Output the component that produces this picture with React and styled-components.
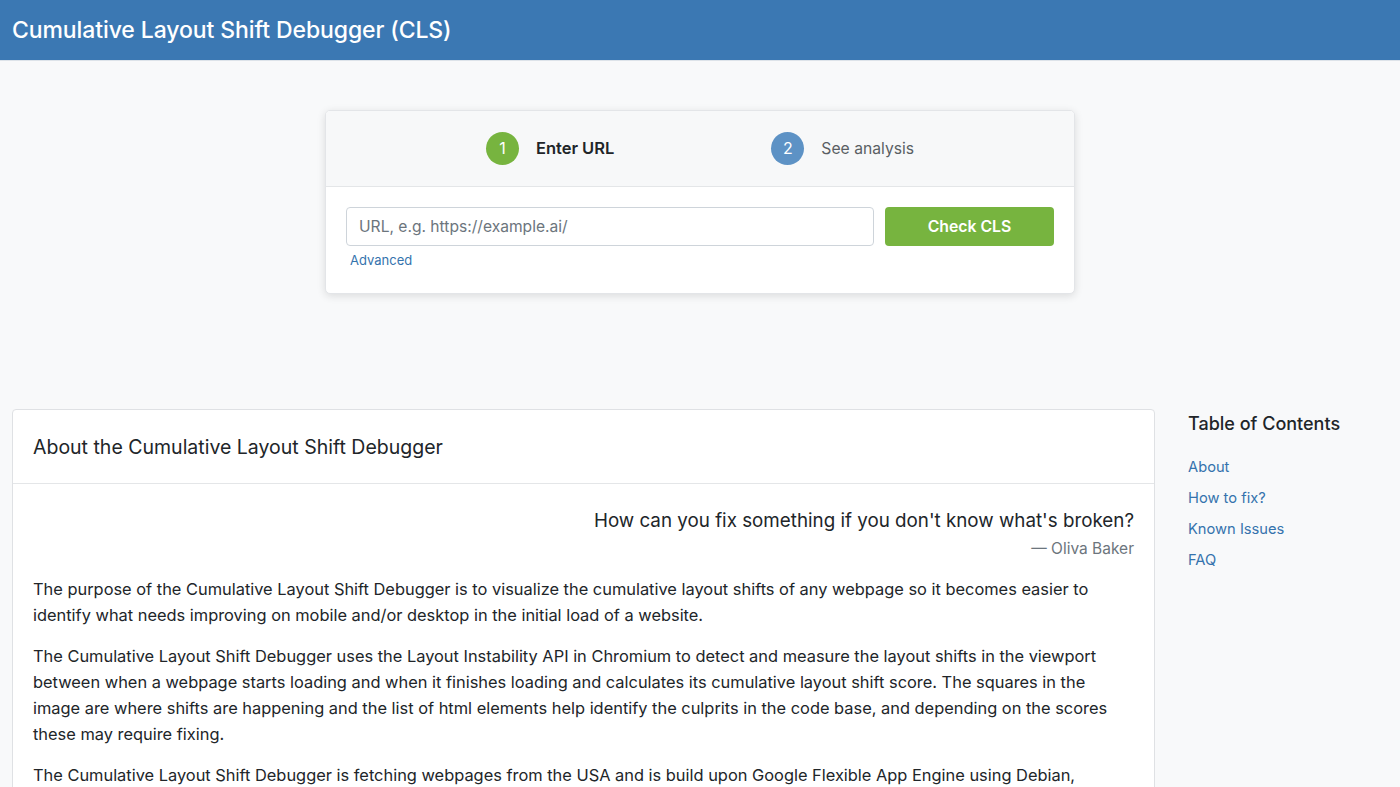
import React from 'react';
import styled, { createGlobalStyle } from 'styled-components';

const GlobalStyle = createGlobalStyle`
    html, body {
        margin: 0;
        padding: 0;
        background: #f8f9fa;
        font-family: Inter, "Liberation Sans", Arial, sans-serif;
        color: #212529;
        overflow: hidden;
    }
    * { box-sizing: border-box; }
`

const Header = styled.header`
    height: 61px;
    background-color: #3b78b3;
    border-bottom: 1px solid #dde3e9;
    display: flex;
    align-items: center;
    padding-left: 12px;
`

const Title = styled.h1`
    margin: 0;
    color: white;
    font-size: 23px;
    font-weight: 500;
    letter-spacing: -0.1px;
`

const Hero = styled.section`
    display: flex;
    justify-content: center;
    padding: 49px 0 115px;
`

const StepCard = styled.div`
    width: 750px;
    background: white;
    border: 1px solid #e3e5e8;
    border-radius: 5px;
    box-shadow: 0 2px 8px rgba(0, 0, 0, 0.12);
    overflow: hidden;
`

const Steps = styled.div`
    height: 76px;
    padding-bottom: 1px;
    background: #f7f8f9;
    border-bottom: 1px solid #e4e6e8;
    display: flex;
    justify-content: center;
    align-items: center;
    gap: 157px;
`

const Step = styled.div`
    display: flex;
    align-items: center;
    gap: 17px;
    font-size: ${p => (p.active ? '16.5px' : '15.7px')};
    font-weight: ${p => (p.active ? 600 : 400)};
    color: ${p => (p.active ? '#212529' : '#5a5f64')};
`

const Circle = styled.span`
    width: 33px;
    height: 33px;
    border-radius: 50%;
    background: ${p => p.color};
    color: white;
    font-weight: 400;
    font-size: 16px;
    display: flex;
    align-items: center;
    justify-content: center;
`

const FormBody = styled.div`
    padding: 20px 20px 24px 20px;
`

const FormRow = styled.div`
    display: flex;
    gap: 11px;
`

const UrlInput = styled.input`
    flex: 1;
    height: 39px;
    border: 1px solid #ced4da;
    border-radius: 4px;
    padding: 0 12px;
    font-size: 15.6px;
    font-family: inherit;
    color: #495057;
    &::placeholder { color: #6c757d; }
    &:focus { outline: none; }
`

const CheckButton = styled.button`
    width: 169px;
    height: 39px;
    border: none;
    border-radius: 4px;
    background: #77b43f;
    color: white;
    font-family: inherit;
    font-size: 15.8px;
    font-weight: 600;
`

const SmallLink = styled.a`
    display: inline-block;
    margin: 6px 0 0 4px;
    font-size: 13px;
    color: #3573ad;
    text-decoration: none;
`

const Content = styled.div`
    display: grid;
    grid-template-columns: 1143px 1fr;
    gap: 33px;
    padding: 0 12px;
`

const AboutCard = styled.article`
    background: white;
    border: 1px solid #dfe1e4;
    border-radius: 4px;
`

const AboutHeader = styled.h2`
    margin: 0;
    height: 74px;
    display: flex;
    align-items: center;
    padding: 0 20px;
    font-size: 19.5px;
    font-weight: 400;
    border-bottom: 1px solid #e4e6e8;
`

const AboutBody = styled.div`
    padding: 25px 20px 0;
`

const Quote = styled.blockquote`
    margin: 0 0 15px;
    text-align: right;
    p {
        margin: 0;
        font-size: 18.8px;
        line-height: 24px;
    }
    footer {
        margin-top: 4px;
        font-size: 15.5px;
        line-height: 24px;
        color: #6c757d;
    }
`

const Paragraph = styled.p`
    margin: 0 0 15px;
    font-size: 16.4px;
    line-height: 26px;
`

const Sidebar = styled.aside`
    padding-top: 3px;
`

const TocTitle = styled.h3`
    margin: 0 0 16px;
    font-size: 18px;
    font-weight: 500;
    line-height: 24px;
`

const TocList = styled.ul`
    list-style: none;
    margin: 0;
    padding: 0;
`

const TocItem = styled.li`
    a {
        display: block;
        font-size: 14.7px;
        line-height: 31px;
        color: #3573ad;
        text-decoration: none;
    }
`

const tocLinks = ['About', 'How to fix?', 'Known Issues', 'FAQ'];

export default function App() {
    return (
        <>
            <GlobalStyle />
            <Header>
                <Title>Cumulative Layout Shift Debugger (CLS)</Title>
            </Header>
            <Hero>
                <StepCard>
                    <Steps>
                        <Step active>
                            <Circle color="#77b43f">1</Circle>
                            Enter URL
                        </Step>
                        <Step>
                            <Circle color="#5d92c5">2</Circle>
                            See analysis
                        </Step>
                    </Steps>
                    <FormBody>
                        <FormRow>
                            <UrlInput placeholder="URL, e.g. https://example.ai/" />
                            <CheckButton>Check CLS</CheckButton>
                        </FormRow>
                        <SmallLink href="#">Advanced</SmallLink>
                    </FormBody>
                </StepCard>
            </Hero>
            <Content>
                <AboutCard>
                    <AboutHeader>About the Cumulative Layout Shift Debugger</AboutHeader>
                    <AboutBody>
                        <Quote>
                            <p>How can you fix something if you don't know what's broken?</p>
                            <footer>— Oliva Baker</footer>
                        </Quote>
                        <Paragraph>
                            The purpose of the Cumulative Layout Shift Debugger is to visualize the cumulative layout shifts of any webpage so it becomes easier to identify what needs improving on mobile and/or desktop in the initial load of a website.
                        </Paragraph>
                        <Paragraph>
                            The Cumulative Layout Shift Debugger uses the Layout Instability API in Chromium to detect and measure the layout shifts in the viewport between when a webpage starts loading and when it finishes loading and calculates its cumulative layout shift score. The squares in the image are where shifts are happening and the list of html elements help identify the culprits in the code base, and depending on the scores these may require fixing.
                        </Paragraph>
                        <Paragraph>
                            The Cumulative Layout Shift Debugger is fetching webpages from the USA and is build upon Google Flexible App Engine using Debian, Node.js and Puppeteer with a headless Chromium browser.
                        </Paragraph>
                    </AboutBody>
                </AboutCard>
                <Sidebar>
                    <TocTitle>Table of Contents</TocTitle>
                    <TocList>
                        {tocLinks.map(link => (
                            <TocItem key={link}><a href="#">{link}</a></TocItem>
                        ))}
                    </TocList>
                </Sidebar>
            </Content>
        </>
    );
}
